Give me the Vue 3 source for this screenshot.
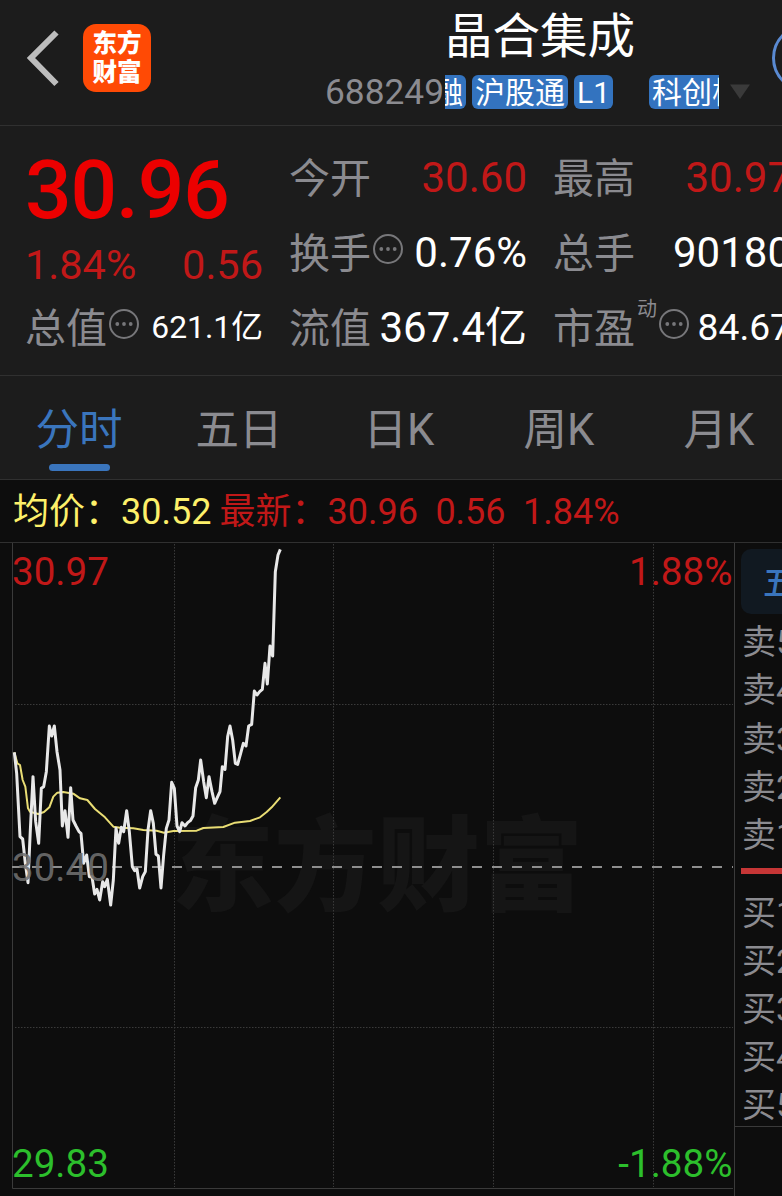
<template>
  <div class="page">
    <header class="header">
      <svg class="back" width="40" height="60" viewBox="0 0 40 60">
        <path d="M33.5 4.5 L8 30 L33.5 56" fill="none" stroke="#bdbdbd" stroke-width="6" />
      </svg>
      <div class="logo">
        <span>东方</span>
        <span>财富</span>
      </div>
      <div class="title-block">
        <h1 class="stock-name">晶合集成</h1>
        <div class="stock-meta">
          <span class="stock-code">688249</span>
          <div class="tags">
            <span class="tag tag-first">融</span>
            <span class="tag">沪股通</span>
            <span class="tag">L1</span>
            <span class="tag tag-last">科创板</span>
          </div>
          <svg class="caret" width="22" height="16" viewBox="0 0 22 16">
            <path d="M1 0.5 H21 L11 15 Z" fill="#3a3a3a" />
          </svg>
        </div>
      </div>
      <div class="ring"></div>
    </header>

    <section class="quote">
      <div class="quote-col">
        <div class="price">30.96</div>
        <div class="change red">
          <span>1.84%</span>
          <span>0.56</span>
        </div>
        <div class="cell">
          <span class="label">总值</span>
          <svg class="more" viewBox="0 0 30 30"><circle class="more-ring" cx="15" cy="15" r="14" /><circle cx="8.3" cy="15" r="1.9" /><circle cx="15" cy="15" r="1.9" /><circle cx="21.7" cy="15" r="1.9" /></svg>
          <span class="value small">621.1亿</span>
        </div>
      </div>
      <div v-for="(col, i) in columns" :key="i" class="quote-col">
        <div v-for="item in col" :key="item.label" class="cell">
          <span class="label">{{ item.label }}</span>
          <span v-if="item.sup" class="sup">{{ item.sup }}</span>
          <svg v-if="item.more" class="more" viewBox="0 0 30 30"><circle class="more-ring" cx="15" cy="15" r="14" /><circle cx="8.3" cy="15" r="1.9" /><circle cx="15" cy="15" r="1.9" /><circle cx="21.7" cy="15" r="1.9" /></svg>
          <span :class="['value', item.cls]">{{ item.value }}</span>
        </div>
      </div>
    </section>

    <nav class="tabs">
      <button
        v-for="tab in tabs"
        :key="tab"
        :class="['tab', { active: tab === activeTab }]"
        @click="activeTab = tab"
      >
        {{ tab }}
      </button>
    </nav>

    <div class="summary">
      <span class="avg">均价：30.52</span>
      <span class="red">最新：30.96</span>
      <span class="red">0.56</span>
      <span class="red">1.84%</span>
    </div>

    <main class="body">
      <svg class="chart" width="735" height="653" viewBox="0 543 735 653">
        <text class="watermark" x="171" y="903" textLength="412">东方财富</text>
        <g class="grid">
          <path v-for="x in gridX" :key="x" :d="`M${x} 544 V1187`" />
          <path v-for="y in gridY" :key="y" :d="`M15 ${y} H733`" />
        </g>
        <path class="frame" d="M12.5 543 V1188.5 H733 M734.5 543 V1196" />
        <path class="base-line" d="M12 867 H733" />
        <g transform="translate(0 720) scale(0.33333)">
          <polyline class="avg-line" :points="avgPoints" />
          <polyline class="price-line" :points="pricePoints" />
        </g>
        <text class="axis up" x="12" y="585">30.97</text>
        <text class="axis up" x="732.5" y="585" text-anchor="end">1.88%</text>
        <text class="axis flat" x="12" y="881">30.40</text>
        <text class="axis down" x="12" y="1177">29.83</text>
        <text class="axis down" x="732.5" y="1177" text-anchor="end">-1.88%</text>
      </svg>

      <aside class="book">
        <div class="book-tab">五档</div>
        <div v-for="n in [5, 4, 3, 2, 1]" :key="'s' + n" class="level">卖{{ n }}</div>
        <div class="divider"></div>
        <div v-for="n in 5" :key="'b' + n" class="level buy">买{{ n }}</div>
        <div class="book-end"></div>
      </aside>
    </main>
  </div>
</template>

<script setup>
import { ref } from "vue";

const tabs = ["分时", "五日", "日K", "周K", "月K"];
const activeTab = ref("分时");

const columns = [
  [
    { label: "今开", value: "30.60", cls: "red" },
    { label: "换手", value: "0.76%", more: true },
    { label: "流值", value: "367.4亿" },
  ],
  [
    { label: "最高", value: "30.97", cls: "red" },
    { label: "总手", value: "90180" },
    { label: "市盈", value: "84.67", sup: "动", more: true, cls: "medium" },
  ],
];

const gridX = [174.5, 333.5, 493.5, 653.5];
const gridY = [704.5, 1027.5];

// Line points, in thirds of a pixel from the chart's inner origin
const pricePoints =
  "43,97 50,160 60,350 68,357 76,430 84,488 91,330 99,170 107,305 116,370 124,205 131,200 139,155 148,18 155,48 163,18 " +
  "171,95 180,150 187,318 195,272 204,352 212,203 219,300 228,318 237,335 243,340 251,430 260,405 268,470 276,470 284,522 " +
  "291,508 299,540 308,485 314,500 322,478 332,555 340,480 348,325 356,370 364,322 371,335 380,272 388,335 397,440 404,452 " +
  "411,447 419,504 428,470 436,455 444,330 452,272 460,310 468,403 475,408 483,504 491,405 499,325 507,300 515,187 523,205 " +
  "531,318 539,335 546,308 555,318 563,308 571,302 579,288 587,203 595,180 602,120 611,185 619,233 627,170 636,215 644,250 " +
  "652,232 660,215 667,140 675,148 683,50 690,18 698,60 706,130 713,133 722,100 730,70 738,78 746,18 755,13 763,-87 771,-75 " +
  "779,-85 787,-92 795,-170 802,-108 810,-222 818,-192 826,-445 834,-495 841,-512";

const avgPoints =
  "43,97 52,130 60,135 68,180 76,200 84,265 90,275 115,282 132,276 148,262 160,230 172,218 190,216 220,221 240,235 262,240 " +
  "285,267 315,292 340,320 360,323 400,325 430,330 470,332 492,338 520,333 590,332 610,324 670,321 705,308 750,303 780,292 " +
  "800,276 815,262 841,232";
</script>

<style>
body {
  background: #0d0d0d;
  overflow: hidden;
}
</style>

<style scoped>
.page {
  width: 782px;
  height: 1196px;
  overflow: hidden;
  background: #0d0d0d;
  color: #fff;
  font-family: Roboto, "Noto Sans CJK SC", sans-serif;
}

.red {
  color: #c11818;
}

.header {
  position: relative;
  display: flex;
  height: 125px;
  background: #1c1c1c;
  border-bottom: 1px solid #303030;
}

.back {
  flex: none;
  margin: 28px 0 0 23px;
}

.logo {
  flex: none;
  display: flex;
  flex-direction: column;
  justify-content: center;
  align-items: center;
  width: 68px;
  height: 68px;
  margin: 24px 0 0 20px;
  border-radius: 13px;
  background: #ff4a05;
  font-size: 24.5px;
  font-weight: 900;
  line-height: 29px;
}

.title-block {
  flex: none;
  width: 428px;
  margin-left: 174px;
}

.stock-name {
  margin: 9px 0 0 120px;
  font-size: 47.5px;
  font-weight: 400;
  line-height: 56px;
}

.stock-meta {
  display: flex;
  align-items: center;
  height: 34px;
  margin-top: 10px;
}

.stock-code {
  flex: none;
  width: 120px;
  font-size: 35.3px;
  line-height: 36px;
  color: #8b8b90;
}

.tags {
  flex: none;
  display: flex;
  gap: 6px;
  width: 274px;
  overflow: hidden;
}

.tag {
  flex: none;
  height: 34px;
  padding: 0 3px;
  border-radius: 6px;
  background: #3373bf;
  font-size: 30px;
  line-height: 36px;
}

.tag-first {
  margin-left: -15px;
}

.tag-last {
  margin-left: 30px;
}

.caret {
  flex: none;
  margin-left: 10px;
}

/* badge cut off by the right edge */
.ring {
  position: absolute;
  left: 772px;
  top: 24px;
  width: 62px;
  height: 62px;
  border: 3px solid #5a8ad2;
  border-radius: 50%;
}

.quote {
  display: grid;
  grid-template-columns: repeat(3, 238px);
  column-gap: 26px;
  height: 235px;
  padding: 14px 0 0 25px;
  background: #1c1c1c;
  border-bottom: 1px solid #303030;
}

.price {
  height: 100px;
  font-size: 82px;
  font-weight: 500;
  letter-spacing: -1.1px;
  line-height: 100px;
  color: #ec0000;
}

.change {
  display: flex;
  justify-content: space-between;
  height: 50px;
  font-size: 41.5px;
  line-height: 50px;
}

.cell {
  display: flex;
  align-items: center;
  height: 75px;
}

.label {
  padding-top: 4px;
  font-size: 41px;
  line-height: 71px;
  color: #8b8b90;
}

.sup {
  align-self: flex-start;
  margin: 7px -4px 0 2px;
  font-size: 20px;
  line-height: 24px;
  color: #8b8b90;
}

.more {
  flex: none;
  width: 30px;
  height: 30px;
  margin: -8px 0 0 2px;
  fill: #77777a;
}

.sup + .more {
  margin-left: 6px;
}

.more-ring {
  fill: none;
  stroke: #77777a;
  stroke-width: 2;
}

.value {
  margin-left: auto;
  font-size: 42px;
  line-height: 75px;
}

.value.small {
  font-size: 31.8px;
}

.value.medium {
  font-size: 37.2px;
}

.tabs {
  display: flex;
  height: 103px;
  margin-left: -1px;
  background: #1c1c1c;
  border-bottom: 1px solid #303030;
}

.tab {
  flex: none;
  display: flex;
  flex-direction: column;
  align-items: center;
  width: 160px;
  padding: 25px 0 0;
  border: none;
  background: none;
  color: #8b8b90;
  font-family: inherit;
  font-size: 43.5px;
  line-height: 60px;
  cursor: pointer;
}

.tab.active {
  color: #3a75bd;
}

.tab.active::after {
  content: "";
  width: 61px;
  height: 7px;
  margin-top: 3px;
  border-radius: 3.5px;
  background: #3a75bd;
}

.summary {
  display: flex;
  height: 62px;
  padding-left: 13px;
  border-bottom: 1px solid #303030;
  font-size: 36px;
  line-height: 65px;
  white-space: nowrap;
}

.summary span + span {
  margin-left: 17.5px;
}

.summary .avg {
  color: #fdf06a;
}

.summary .avg + span {
  margin-left: 8px;
}

.body {
  display: flex;
}

.chart {
  flex: none;
  display: block;
}

.watermark {
  fill: #151515;
  font-size: 103px;
  font-weight: 900;
}

.grid path {
  fill: none;
  stroke: #3a3a3a;
  stroke-width: 1;
  stroke-dasharray: 1.5 1.5;
}

.frame {
  fill: none;
  stroke: #3a3a3a;
  stroke-width: 1;
}

.base-line {
  stroke: #8e8e8e;
  stroke-width: 2;
  stroke-dasharray: 10 10;
}

.price-line {
  fill: none;
  stroke: #e8e8e8;
  stroke-width: 9;
  stroke-linejoin: round;
}

.avg-line {
  fill: none;
  stroke: #e9dd74;
  stroke-width: 6;
  stroke-linejoin: round;
}

.axis {
  font-size: 38.6px;
}

.up {
  fill: #c11818;
}

.down {
  fill: #2cbf2c;
}

.flat {
  fill: #707070;
  fill-opacity: 0.9;
}

.book {
  flex: none;
  width: 47px;
  overflow: hidden;
  white-space: nowrap;
}

.book-tab {
  width: 120px;
  height: 65px;
  margin: 6px 0 4px 6px;
  padding-left: 22px;
  border-radius: 10px;
  background: #111921;
  color: #3a75bd;
  font-size: 32px;
  font-weight: 500;
  line-height: 69px;
}

.level {
  height: 48.3px;
  padding-left: 7px;
  color: #8b8b90;
  font-size: 34px;
  line-height: 48.3px;
}

.level.buy {
  height: 48px;
  line-height: 48px;
}

.divider {
  height: 6px;
  margin: 9px 0 15px 6px;
  background: #c63636;
}

.book-end {
  height: 1px;
  margin-top: -3px;
  background: #3a3a3a;
}
</style>
